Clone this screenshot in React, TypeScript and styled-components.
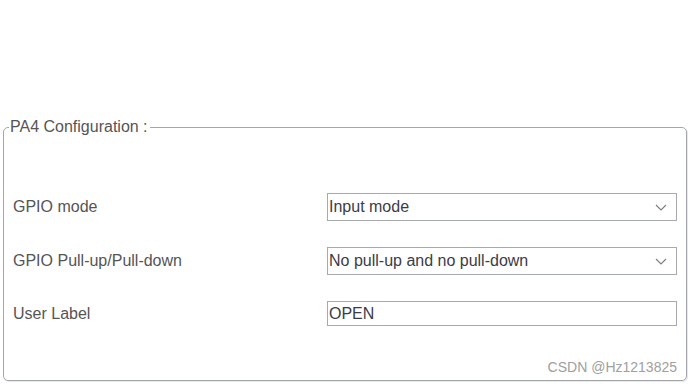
import React from "react";
import styled, { createGlobalStyle } from "styled-components";

const Global = createGlobalStyle`
  html, body { margin: 0; padding: 0; background: #ffffff; }
  body { font-family: "Liberation Sans", Arial, sans-serif; }
  * { box-sizing: border-box; }
`;

const Page = styled.div`
  width: 693px;
  height: 384px;
  padding: 119px 0 0 3px;
  background: #ffffff;
  overflow: hidden;
`;

const Group = styled.fieldset`
  position: relative;
  width: 684px;
  height: 262px;
  margin: 0;
  padding: 58px 9px 0 9px;
  border: 1px solid #a3a7ad;
  border-radius: 5px;
  box-shadow: 1px 1px 0 #e6e8ea;
`;

const Legend = styled.legend`
  margin-left: -4px;
  padding: 0 2px 0 1px;
  font-size: 16px;
  line-height: 16px;
  color: #555555;
`;

const Form = styled.div`
  display: grid;
  grid-template-columns: 314px 350px;
  row-gap: 26px;
  align-items: center;
`;

const Label = styled.div`
  font-size: 16px;
  color: #555555;
  line-height: 18px;
`;

const Field = styled.div<{ $h: number }>`
  position: relative;
  height: ${(p) => p.$h}px;
  border: 1px solid #a6a9ae;
  background: #ffffff;
  display: flex;
  align-items: center;
  padding-left: 1px;
  font-size: 16px;
  color: #3c3c46;
`;

const Chevron = styled.svg`
  position: absolute;
  right: 9px;
  top: 50%;
  margin-top: -3px;
`;

const Watermark = styled.div`
  position: absolute;
  right: 9px;
  bottom: 5px;
  font-size: 14px;
  color: #a0a0a0;
`;

const Select = ({ value }: { value: string }) => (
  <Field $h={28}>
    {value}
    <Chevron width="12" height="7" viewBox="0 0 12 7">
      <polyline points="1,1 6,6 11,1" fill="none" stroke="#7a7d82" strokeWidth="1.1" />
    </Chevron>
  </Field>
);

export default function App() {
  return (
    <>
      <Global />
      <Page>
        <Group>
          <Legend>PA4 Configuration :</Legend>
          <Form>
            <Label>GPIO mode</Label>
            <Select value="Input mode" />
            <Label>GPIO Pull-up/Pull-down</Label>
            <Select value="No pull-up and no pull-down" />
            <Label>User Label</Label>
            <Field $h={25}>OPEN</Field>
          </Form>
          <Watermark>CSDN @Hz1213825</Watermark>
        </Group>
      </Page>
    </>
  );
}
